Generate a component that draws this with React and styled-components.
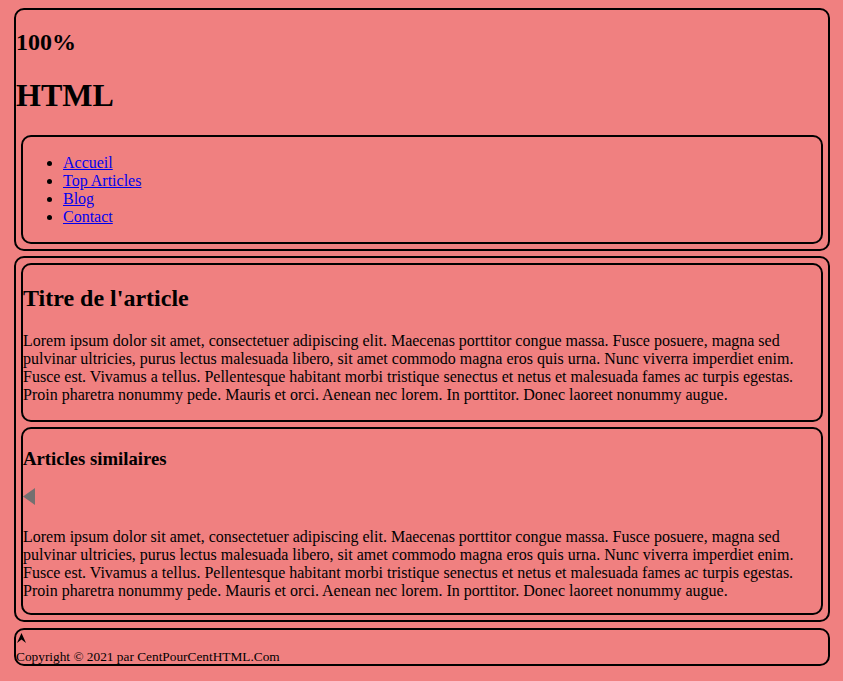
import React from "react";
import styled, { createGlobalStyle } from "styled-components";

const GlobalStyle = createGlobalStyle`
  body {
    margin: 8px;
    background: lightcoral;
    font-family: "Liberation Serif", "Times New Roman", serif;
    color: #000;
  }
`;

const Box = styled.div`
  border: 2px solid #000;
  border-radius: 10px;
  margin: ${(props) => props.margin || "0 5px 7px 6px"};
`;

const Brand = styled.h2`
  font-size: 24px;
  margin: 19px 0;
`;

const SiteName = styled.h1`
  font-size: 32px;
  margin: 21px 0;
`;

const NavList = styled.ul`
  margin: 17px 0 16px;
  padding-left: 40px;

  a {
    color: #0000ee;
  }
`;

const ArticleTitle = styled.h2`
  font-size: 24px;
  margin: 20px 0;
`;

const SectionTitle = styled.h3`
  font-size: 18.72px;
  margin: 18.72px 0;
`;

const Text = styled.p`
  font-size: 16px;
  margin: ${(props) => (props.tight ? "16px 0 13px" : "16px 0")};
`;

const Slider = styled.div`
  height: 24px;
  display: flex;
  align-items: flex-start;
`;

const ArrowRow = styled.div`
  height: 19px;
  padding: 3px 0 0 1px;
  box-sizing: border-box;
  line-height: 0;
`;

const Copyright = styled.p`
  font-size: 13.33px;
  margin: 0;
  line-height: 15px;
`;

const lorem =
  "Lorem ipsum dolor sit amet, consectetuer adipiscing elit. Maecenas porttitor congue massa. Fusce posuere, magna sed pulvinar ultricies, purus lectus malesuada libero, sit amet commodo magna eros quis urna. Nunc viverra imperdiet enim. Fusce est. Vivamus a tellus. Pellentesque habitant morbi tristique senectus et netus et malesuada fames ac turpis egestas. Proin pharetra nonummy pede. Mauris et orci. Aenean nec lorem. In porttitor. Donec laoreet nonummy augue.";

export default function App() {
  return (
    <>
      <GlobalStyle />
      <Box as="header" margin="0 5px 5px 6px">
        <Brand>100%</Brand>
        <SiteName>HTML</SiteName>
        <Box as="nav" margin="5px">
          <NavList>
            <li><a href="#">Accueil</a></li>
            <li><a href="#">Top Articles</a></li>
            <li><a href="#">Blog</a></li>
            <li><a href="#">Contact</a></li>
          </NavList>
        </Box>
      </Box>
      <Box as="main" margin="0 5px 6px 6px">
        <Box as="article" margin="5px">
          <ArticleTitle>Titre de l'article</ArticleTitle>
          <Text>{lorem}</Text>
        </Box>
        <Box as="section" margin="5px">
          <SectionTitle>Articles similaires</SectionTitle>
          <Slider>
            <svg width="12" height="17" viewBox="0 0 12 17">
              <polygon points="12,0 12,17 0,8.5" fill="#747070" />
            </svg>
          </Slider>
          <Text tight>{lorem}</Text>
        </Box>
      </Box>
      <Box as="footer" margin="0 5px 0 6px">
        <ArrowRow>
          <svg width="9" height="10" viewBox="0 0 9 10">
            <path d="M4.5 0 L9 10 L4.5 6.5 L0 10 Z" fill="#000" />
          </svg>
        </ArrowRow>
        <Copyright>Copyright © 2021 par CentPourCentHTML.Com</Copyright>
      </Box>
    </>
  );
}
